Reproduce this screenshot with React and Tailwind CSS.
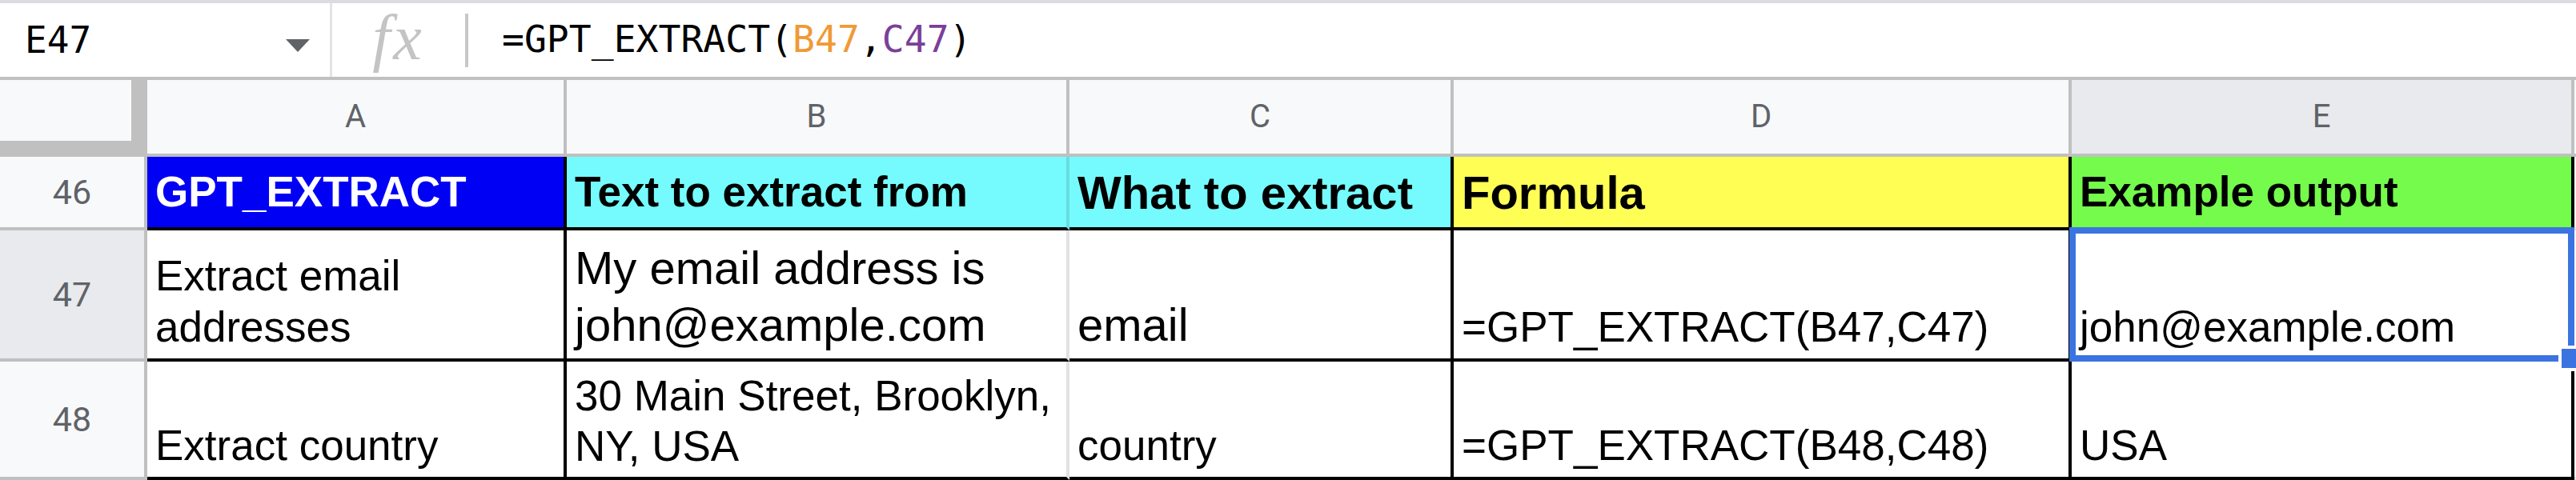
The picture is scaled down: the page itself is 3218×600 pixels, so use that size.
import React from 'react';

const sans = "[font-family:'Liberation_Sans',Arial,sans-serif]";
const mono = "[font-family:'DejaVu_Sans_Mono','Liberation_Mono',monospace]";
const roboto = "[font-family:Roboto,'Liberation_Sans',sans-serif]";

const FormulaBar = () => {
    return (
        <div className="flex h-[96px] items-center border-b-4 border-[#c0c0c0] bg-white">
            <div className="flex h-full w-[412px] items-center justify-between pl-[31px] pr-[25px]">
                <span className={`${mono} text-[46px] text-black`}>E47</span>
                <svg width="30" height="16" viewBox="0 0 30 16" className="mt-[14px]">
                    <path d="M0 0 L30 0 L15 16 Z" fill="#5f6368" />
                </svg>
            </div>
            <div className="h-full w-[3px] bg-[#e3e3e3]"></div>
            <div className="flex h-full w-[166px] items-center justify-center">
                <span className="[font-family:'Liberation_Serif',serif] text-[80px] italic leading-none tracking-[4px] text-[#c4c4c4] -mt-[6px]">fx</span>
            </div>
            <div className="h-[67px] w-[4px] bg-[#c8c8c8]"></div>
            <div className={`${mono} pl-[42px] text-[46.4px] text-black whitespace-nowrap`}>
                =GPT_EXTRACT(<span className="text-[#f09a36]">B47</span>,<span className="text-[#7b3f99]">C47</span>)
            </div>
        </div>
    );
};

const ColumnHeaders = () => {
    const cols = [
        { label: 'A', w: 'w-[524px]', bg: 'bg-[#f8f9fa]' },
        { label: 'B', w: 'w-[628px]', bg: 'bg-[#f8f9fa]' },
        { label: 'C', w: 'w-[480px]', bg: 'bg-[#f8f9fa]' },
        { label: 'D', w: 'w-[772px]', bg: 'bg-[#f8f9fa]' },
        { label: 'E', w: 'w-[628px]', bg: 'bg-[#e8eaed]' },
    ];
    return (
        <div className="flex h-[96px] border-b-4 border-[#c0c0c0] bg-[#f8f9fa]">
            <div className="h-full w-[184px] shrink-0 bg-[#c0c0c0]">
                <div className="h-[76px] w-[164px] bg-[#f8f9fa]"></div>
            </div>
            {cols.map((c) => (
                <div
                    key={c.label}
                    className={`${c.w} ${c.bg} flex h-full shrink-0 items-center justify-center border-r-4 border-[#c0c0c0] ${roboto} text-[40px] text-[#5f6368]`}
                >
                    {c.label}
                </div>
            ))}
            <div className="flex-1"></div>
        </div>
    );
};

const RowHeader = ({ n, selected }) => (
    <div
        className={`flex h-full w-[184px] shrink-0 items-center justify-center border-r-4 border-b-4 border-[#c0c0c0] ${selected ? 'bg-[#e8eaed]' : 'bg-[#f8f9fa]'} ${roboto} text-[43px] text-[#5f6368]`}
    >
        {n}
    </div>
);

const Cell = ({ w, bg = 'bg-white', border = 'border-black', size = 'text-[53px]', lead = 'leading-[64px]', header, color = 'text-black', children, selected }) => (
    <div
        className={`${w} ${bg} relative flex h-full shrink-0 border-r-4 border-b-4 border-b-black ${border} pl-[10px] pr-[6px] ${header ? 'items-center font-bold' : 'items-end pb-[7px]'} ${sans} ${size} ${lead} ${color}`}
    >
        <div>{children}</div>
        {selected && (
            <>
                <div className="pointer-events-none absolute -left-[3px] -top-[4px] -right-[4px] -bottom-[4px] border-[8px] border-[#3b74e0]"></div>
                <div className="absolute left-[608px] top-[144px] z-10 h-[32px] w-[32px] border-4 border-white bg-[#3b74e0]"></div>
            </>
        )}
    </div>
);

const App = () => {
    return (
        <div className="w-[3218px] overflow-hidden bg-white">
            <div className="h-1 bg-[#dadce0]"></div>
            <FormulaBar />
            <ColumnHeaders />

            <div className="flex h-[92px]">
                <RowHeader n="46" />
                <Cell w="w-[524px]" bg="bg-[#0000f5]" header color="text-white" lead="leading-normal">GPT_EXTRACT</Cell>
                <Cell w="w-[628px]" bg="bg-[#75fbfd]" border="border-r-[#66dfe1]" header lead="leading-normal">Text to extract from</Cell>
                <Cell w="w-[480px]" bg="bg-[#75fbfd]" header size="text-[58px]" lead="leading-normal">What to extract</Cell>
                <Cell w="w-[772px]" bg="bg-[#fffe55]" header size="text-[58px]" lead="leading-normal">Formula</Cell>
                <Cell w="w-[628px]" bg="bg-[#75fb4c]" header lead="leading-normal">Example output</Cell>
                <div className="h-full flex-1 border-b-4 border-[#e2e2e2]"></div>
            </div>

            <div className="flex h-[164px]">
                <RowHeader n="47" selected />
                <Cell w="w-[524px]">Extract email addresses</Cell>
                <Cell w="w-[628px]" border="border-r-[#e2e2e2]" size="text-[58px]" lead="leading-[71px]">My email address is john@example.com</Cell>
                <Cell w="w-[480px]" size="text-[58px]" lead="leading-[71px]">email</Cell>
                <Cell w="w-[772px]">=GPT_EXTRACT(B47,C47)</Cell>
                <Cell w="w-[628px]" selected>john@example.com</Cell>
                <div className="h-full flex-1 border-b-4 border-[#e2e2e2]"></div>
            </div>

            <div className="flex h-[148px]">
                <RowHeader n="48" />
                <Cell w="w-[524px]">Extract country</Cell>
                <Cell w="w-[628px]" border="border-r-[#e2e2e2]" lead="leading-[63px]">30 Main Street, Brooklyn, NY, USA</Cell>
                <Cell w="w-[480px]">country</Cell>
                <Cell w="w-[772px]">=GPT_EXTRACT(B48,C48)</Cell>
                <Cell w="w-[628px]">USA</Cell>
                <div className="h-full flex-1 border-b-4 border-[#e2e2e2]"></div>
            </div>
        </div>
    );
};

export default App;
